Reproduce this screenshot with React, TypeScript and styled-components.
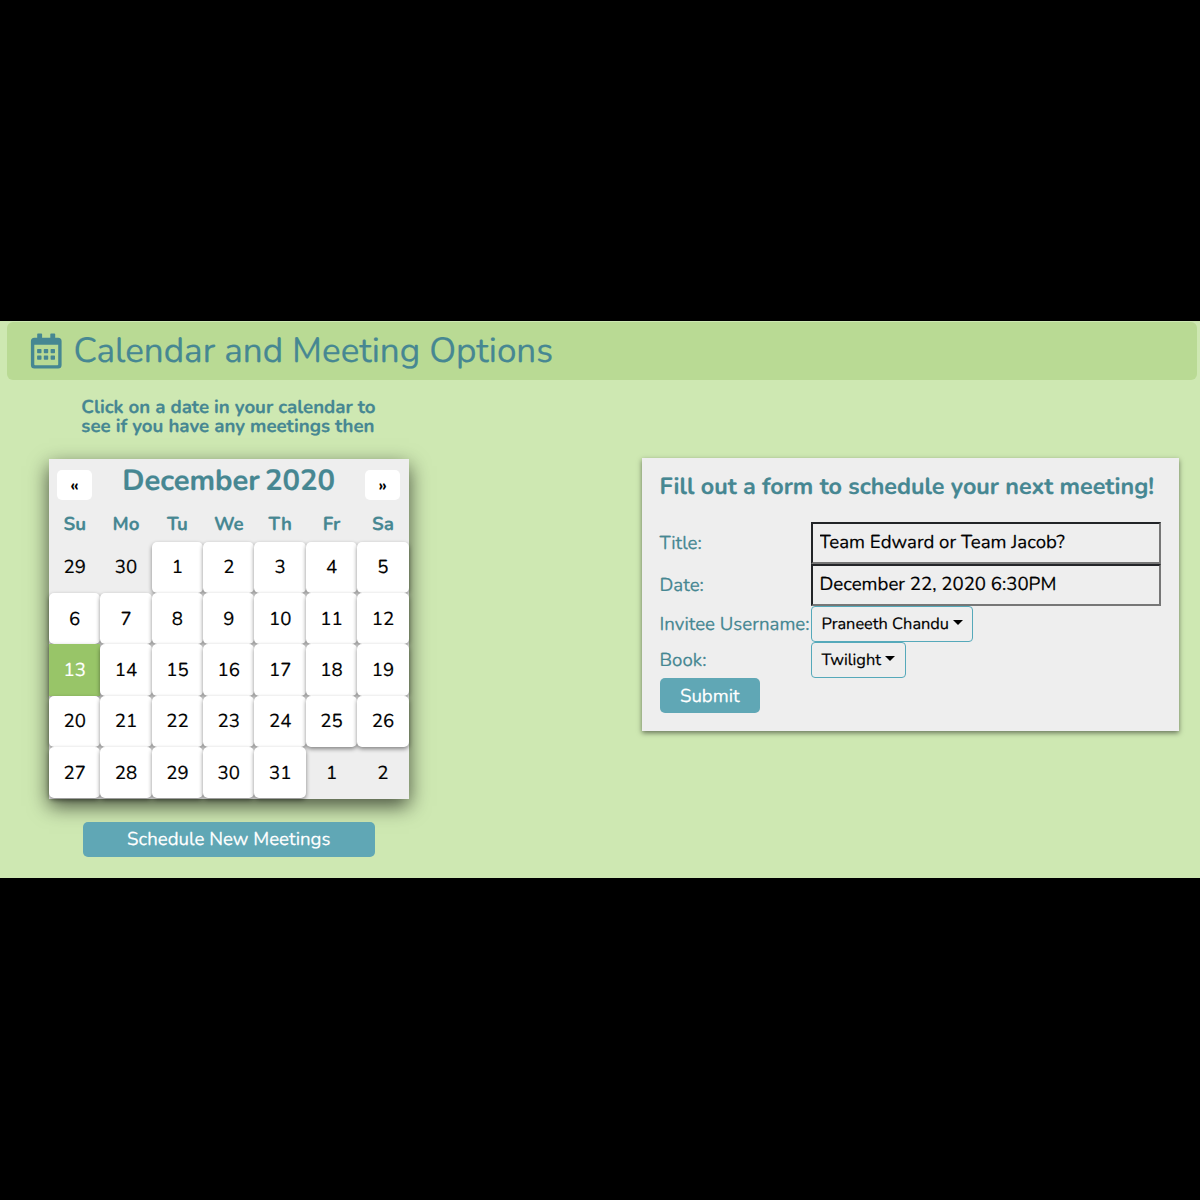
import React from "react";
import styled, { createGlobalStyle } from "styled-components";

const TEAL = "#468792";
const BUTTON = "#60a7b5";
const PANEL = "#eeeeee";

const GlobalStyle = createGlobalStyle`
  * { box-sizing: border-box; }
  body { margin: 0; background: #000; text-rendering: geometricPrecision; }
  button, input { font-family: inherit; margin: 0; text-rendering: inherit; }
`;

const Screen = styled.div`
  height: 1200px;
  padding-top: 321px;
  background: #000;
  font-family: Nunito, Lato, sans-serif;
  font-size: 18.65px;
  overflow: hidden;
`;

const Page = styled.main`
  height: 557px;
  padding: 1px 3px 0 7px;
  background: #cee8b2;
  overflow: hidden;
  -webkit-text-stroke: 0.2px;
`;

const Header = styled.header`
  display: flex;
  align-items: center;
  height: 58px;
  padding-left: 23px;
  border-radius: 6px;
  background: #b9da94;
  color: ${TEAL};
`;

const Title = styled.h1`
  margin: 0 0 0 10.5px;
  padding-top: 1px;
  font-size: 35px;
  font-weight: 400;
  line-height: 42px;
`;

const Columns = styled.div`
  display: flex;
  justify-content: space-between;
  align-items: flex-start;
  padding: 18px 18px 0 42px;
`;

const CalendarColumn = styled.section`
  display: flex;
  flex-direction: column;
  align-items: center;
  width: 359.6px;
`;

const Hint = styled.p`
  width: 300px;
  height: 38px;
  margin: 0 0 23px 5px;
  color: ${TEAL};
  font-size: 18.65px;
  font-weight: 700;
  line-height: 19px;
  white-space: pre;
`;

const Calendar = styled.div`
  width: 359.6px;
  height: 339.6px;
  background: ${PANEL};
  box-shadow: 0 7px 19px rgba(0, 0, 0, 0.66);
`;

const MonthBar = styled.div`
  display: flex;
  justify-content: space-between;
  height: 47px;
  padding: 0 8.3px 0 8px;
`;

const NavButton = styled.button`
  width: 35px;
  height: 30px;
  margin-top: 11px;
  padding: 2px 0 0;
  border: 0;
  border-radius: 5px;
  background: #fff;
  color: #000;
  font-size: 17px;
  font-weight: 700;
  -webkit-text-stroke: 0;
`;

const Month = styled.h2`
  margin: 6px 0 0;
  color: ${TEAL};
  font-size: 29.15px;
  line-height: 34px;
  word-spacing: -2.6px;
`;

const WeekRow = styled.div`
  display: grid;
  grid-template-columns: repeat(7, 1fr);
  height: 35.5px;
  line-height: 37px;
  text-align: center;
  color: ${TEAL};
  font-size: 18.65px;
  font-weight: 700;
`;

const Days = styled.div`
  display: grid;
  grid-template-columns: repeat(7, 1fr);
  grid-auto-rows: 51.37px;
`;

const Day = styled.div<{ $outside?: boolean; $active?: boolean }>`
  display: flex;
  align-items: center;
  justify-content: center;
  border-radius: ${(p) => (p.$active ? 0 : 5)}px;
  background: ${(p) => (p.$outside ? "transparent" : p.$active ? "#98c568" : "#fff")};
  color: ${(p) => (p.$active ? "#fff" : "#000")};
  box-shadow: ${(p) => (p.$outside ? "none" : "0 2px 4px rgba(0, 0, 0, 0.45)")};
`;

const Button = styled.button<{ $width: number }>`
  width: ${(p) => p.$width}px;
  height: 35px;
  padding: 0;
  border: 0;
  border-radius: 5px;
  background: ${BUTTON};
  color: #fff;
  font-size: 18.65px;
  line-height: 34px;
`;

const ScheduleButton = styled(Button)`
  margin-top: 23.4px;
`;

const SubmitButton = styled(Button)`
  display: block;
`;

const FormCard = styled.form`
  width: 537px;
  height: 273px;
  margin-top: 60px;
  padding: 14px 18px 0 17.5px;
  background: ${PANEL};
  box-shadow: 0 2px 5px rgba(0, 0, 0, 0.5);
`;

const FormTitle = styled.h3`
  height: 50px;
  margin: 0;
  color: ${TEAL};
  font-size: 23.35px;
  line-height: 30px;
  white-space: nowrap;
`;

const Field = styled.div<{ $height: number }>`
  display: grid;
  grid-template-columns: 151.5px 350px;
  align-items: center;
  height: ${(p) => p.$height}px;
`;

const Label = styled.label<{ $lift?: number }>`
  padding-bottom: ${(p) => p.$lift ?? 0}px;
  color: ${TEAL};
  white-space: nowrap;
`;

const Input = styled.input`
  width: 350px;
  height: 42px;
  padding: 0 6px 2px 6.5px;
  border: 2px solid;
  border-color: #222427 #767676 #767676 #222427;
  border-radius: 0;
  background: transparent;
  color: #000;
  font-size: 18.65px;
  outline: 0;
`;

const Dropdown = styled.button<{ $width: number }>`
  display: flex;
  align-items: center;
  width: ${(p) => p.$width}px;
  height: 36px;
  padding: 0 0 2px 9.5px;
  border: 1px solid #55a9ba;
  border-radius: 4px;
  background: transparent;
  color: #000;
  font-size: 16.35px;
  white-space: nowrap;
`;

const Caret = styled.span`
  margin: 0 0 2px 4px;
  border: 5px solid transparent;
  border-top-color: #000;
  border-bottom: 0;
`;

const CalendarIcon = () => (
  <svg width="33" height="36" viewBox="0 0 33 36" fill="currentColor" aria-hidden="true">
    <path
      fillRule="evenodd"
      d="M7.2 4.8V1.3Q7.2.5 8 .5h3.3q.8 0 .8.8v3.5h8.2V1.3q0-.8.8-.8h3.3q.8 0 .8.8v3.5h2.9q3.5 0 3.5 3.5v23.8q0 3.5-3.5 3.5H4.4q-3.5 0-3.5-3.5V8.3q0-3.5 3.5-3.5ZM4.3 11.7v19.8q0 .8.8.8h22.3q.8 0 .8-.8V11.7Z"
    />
    {[16, 22.4].map((y) =>
      [7.1, 13.8, 20.6].map((x) => (
        <rect key={`${x}-${y}`} x={x} y={y} width="4.4" height="4.3" rx="0.7" />
      ))
    )}
  </svg>
);

const weekdays = ["Su", "Mo", "Tu", "We", "Th", "Fr", "Sa"];
const days = Array.from({ length: 35 }, (_, i) => {
  const n = i - 1;
  return { label: n < 1 ? n + 30 : n > 31 ? n - 31 : n, outside: n < 1 || n > 31 };
});

export default function App() {
  return (
    <Screen>
      <GlobalStyle />
      <Page>
        <Header>
          <CalendarIcon />
          <Title>Calendar and Meeting Options</Title>
        </Header>
        <Columns>
          <CalendarColumn>
            <Hint>{"Click on a date in your calendar to\nsee if you have any meetings then"}</Hint>
            <Calendar>
              <MonthBar>
                <NavButton>«</NavButton>
                <Month>December 2020</Month>
                <NavButton>»</NavButton>
              </MonthBar>
              <WeekRow>
                {weekdays.map((d) => (
                  <span key={d}>{d}</span>
                ))}
              </WeekRow>
              <Days>
                {days.map((d, i) => (
                  <Day key={i} $outside={d.outside} $active={d.label === 13}>
                    {d.label}
                  </Day>
                ))}
              </Days>
            </Calendar>
            <ScheduleButton $width={292}>Schedule New Meetings</ScheduleButton>
          </CalendarColumn>
          <FormCard onSubmit={(e) => e.preventDefault()}>
            <FormTitle>Fill out a form to schedule your next meeting!</FormTitle>
            <Field $height={42}>
              <Label $lift={1}>Title:</Label>
              <Input defaultValue="Team Edward or Team Jacob?" />
            </Field>
            <Field $height={42}>
              <Label $lift={1}>Date:</Label>
              <Input defaultValue="December 22, 2020 6:30PM" />
            </Field>
            <Field $height={36}>
              <Label>Invitee Username:</Label>
              <Dropdown type="button" $width={162}>
                Praneeth Chandu <Caret />
              </Dropdown>
            </Field>
            <Field $height={36.4}>
              <Label>Book:</Label>
              <Dropdown type="button" $width={95}>
                Twilight <Caret />
              </Dropdown>
            </Field>
            <SubmitButton $width={100.5}>Submit</SubmitButton>
          </FormCard>
        </Columns>
      </Page>
    </Screen>
  );
}
